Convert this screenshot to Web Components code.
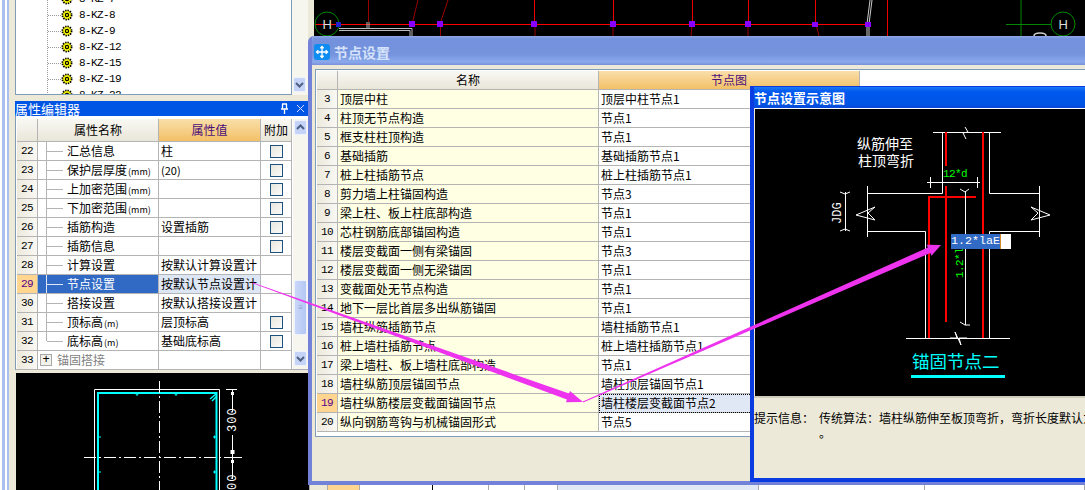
<!DOCTYPE html>
<html lang="zh-CN">

<head>
    <meta charset="UTF-8">
    <title>节点设置</title>
    <style>
        html, body { margin: 0; padding: 0; background: #000; overflow: hidden; }
        body { font: 12px "Noto Sans CJK SC", sans-serif; color: #000; }
    </style>
</head>

<body>
    <app-desktop>
        <side-bar slot="side">
            <tree-panel></tree-panel>
            <panel-title>属性编辑器</panel-title>
            <prop-grid></prop-grid>
            <section-preview></section-preview>
        </side-bar>
        <cad-view slot="main"></cad-view>

        <app-window slot="windows" variant="pale" caption="节点设置" style="left:308px;top:36px;width:790px;height:449px">
            <node-grid></node-grid>
        </app-window>
        <app-window slot="windows" variant="vivid" caption="节点设置示意图" style="left:750px;top:86px;width:350px;height:396px">
            <node-diagram></node-diagram>
        </app-window>
        <arrow-overlay slot="windows"></arrow-overlay>
    </app-desktop>

    <script>
        const FONT = `"Noto Sans CJK SC", sans-serif`;
        const MONO = `"Liberation Mono", monospace`;

        const define = (name, css, html, init) => customElements.define(name, class extends HTMLElement {
            constructor() {
                super();
                this.attachShadow({ mode: 'open' }).innerHTML = `<style>${css}</style>${html}`;
                if (init) init.call(this, this.shadowRoot);
            }
        });

        const scrollBtn = (dir) => `<svg width="13" height="15" viewBox="0 0 13 15">
            <rect x=".5" y=".5" width="12" height="14" rx="1.5" fill="#c5d3f6" stroke="#eef2fd"/>
            <path d="${dir === 'up' ? 'M3 9l3.5-3.5L10 9' : 'M3 6l3.5 3.5L10 6'}" fill="none" stroke="#4d6185" stroke-width="2"/>
        </svg>`;

        // ==================================================================== page frame
        define('app-desktop',
            `:host{display:block;position:relative;width:1085px;height:490px;overflow:hidden}
             .cols{display:grid;grid-template-columns:308px 777px;height:100%}`,
            `<div class="cols"><slot name="side"></slot><slot name="main"></slot></div><slot name="windows"></slot>`);

        define('side-bar',
            `:host{display:flex;flex-direction:column;height:490px;padding-left:15px;box-sizing:border-box;
                background:linear-gradient(90deg,#fff 0 2px,#a9c0ee 2px 5px,#fff 5px 7px,#a9c0ee 7px 9px,#ece9d8 9px)}`,
            `<slot></slot>`);

        // ==================================================================== tree
        const gear = `<svg width="12" height="12" viewBox="0 0 12 12">
            <circle cx="6" cy="6" r="4.6" fill="#ff0" stroke="#000" stroke-width="1.8" stroke-dasharray="1.4 1"/>
            <circle cx="6" cy="6" r="1.6" fill="none" stroke="#000" stroke-width="1.2"/></svg>`;
        define('tree-panel',
            `:host{display:flex;height:95px;margin-bottom:6px;flex:none;overflow:hidden;background:#f6f5ee}
             .list{width:277px;box-sizing:border-box;background:#fff;border:1px solid #7f9db9;border-width:0 1px 1px 1px;overflow:hidden;
                padding:0 0 0 31px;position:relative}
             .rows{margin-top:-9px;border-left:1px dotted #999}
             .row{display:flex;align-items:center;height:16px}
             .row i{width:13px;border-top:1px dotted #999;flex:none}
             .row span{font:11px ${MONO};letter-spacing:-.6px;margin-left:6px}
             .sb{width:15px;display:flex;flex-direction:column;justify-content:flex-end;padding:0 0 3px 1px;box-sizing:border-box;height:95px}`,
            `<div class="list"><div class="rows"></div></div><div class="sb">${scrollBtn('down')}</div>`,
            function (root) {
                root.querySelector('.rows').innerHTML = ['8-KZ-7', '8-KZ-8', '8-KZ-9', '8-KZ-12', '8-KZ-15', '8-KZ-19', '8-KZ-22']
                    .map(t => `<div class="row"><i></i>${gear}<span>${t}</span></div>`).join('');
            });

        define('panel-title',
            `:host{display:flex;align-items:center;justify-content:space-between;height:15px;flex:none;background:#0055e5;color:#fff;
                font:13px/15px ${FONT};padding-right:3px}
             .icons{display:flex;gap:7px;align-items:center}`,
            `<slot></slot><span class="icons">
                <svg width="10" height="11" viewBox="0 0 10 11"><path d="M3 1h5M3.5 1v5M7.5 1v5M2 6h7M5.5 6v5" fill="none" stroke="#fff" stroke-width="1.3"/></svg>
                <svg width="9" height="9" viewBox="0 0 9 9"><path d="M1 1l7 7M8 1L1 8" stroke="#cfe0ff" stroke-width="1"/></svg>
            </span>`);

        // ==================================================================== property grid
        const PROPS = [
            [22, '汇总信息', '柱', 1], [23, '保护层厚度<small>(mm)</small>', '<small class="v">(20)</small>', 1],
            [24, '上加密范围<small>(mm)</small>', '', 1], [25, '下加密范围<small>(mm)</small>', '', 1],
            [26, '插筋构造', '设置插筋', 1], [27, '插筋信息', '', 1],
            [28, '计算设置', '按默认计算设置计', 0], [29, '节点设置', '按默认节点设置计', 0],
            [30, '搭接设置', '按默认搭接设置计', 0], [31, '顶标高<small>(m)</small>', '层顶标高', 1],
            [32, '底标高<small>(m)</small>', '基础底标高', 1],
        ];
        const gridCss = `
            .row{display:grid;height:19px;box-sizing:border-box}
            .row>div{border-right:1px solid #b4b4b4;border-bottom:1px solid #b4b4b4;box-sizing:border-box;white-space:nowrap;overflow:hidden;line-height:18px;height:19px}
            .num{font:11px/18px ${MONO};letter-spacing:-.6px;text-align:center;background:linear-gradient(90deg,#ece9dc,#f9f8f3)}
            .hdr{height:auto;text-align:center;background:linear-gradient(#f9f8f3,#e9e6d9)}
            .hot{background:linear-gradient(#f9dfaa,#f3c067);color:#4b0f7a}
            .on.num{background:#ffd58f;color:#55008a}
            small{font-size:9px;margin-left:1px}
            small.v{font-size:11px;margin:0}`;
        define('prop-grid',
            `:host{display:flex;height:254px;flex:none;box-sizing:border-box;background:#fff;border-left:1px solid #7f9db9;border-bottom:1px solid #aab;padding:3px 0 0 1px}
             ${gridCss}
             .grid{width:276px}
             .row{grid-template-columns:21px 121px 102px 31px}
             .head{height:23px}
             .head>div{height:23px;line-height:22px}
             .name{position:relative;padding-left:29px}
             .name::before{content:"";position:absolute;left:8px;top:0;bottom:0;border-left:1px solid #b4b4b4}
             .name::after{content:"";position:absolute;left:9px;top:9px;width:16px;border-top:1px solid #b4b4b4}
             .name.last::before{bottom:9px}
             .val{padding-left:2px}
             .on.name{background:#316ac5;color:#fff}
             .on.name::before,.on.name::after{border-color:#dfe6f5}
             .on.val{background:#dce6f4}
             .chk{display:flex;align-items:center;justify-content:center}
             .chk i{display:block;width:13px;height:13px;box-sizing:border-box;border:1px solid #1c5180;background:linear-gradient(135deg,#e8e6dd,#fbfbf9)}
             .group{display:flex;align-items:center;color:#808080;padding-left:2px;gap:5px}
             .group b{display:grid;place-items:center;width:12px;height:12px;box-sizing:border-box;border:1px solid #a8a8a8;background:#f2f1ea;color:#000;font:400 12px/10px ${MONO}}
             .sb{width:15px;margin-left:1px;padding:1px 0 3px 1px;box-sizing:border-box;background:#f6f5ee;display:flex;flex-direction:column;justify-content:space-between;position:relative}
             .thumb{position:absolute;left:1px;top:161px;width:13px;height:55px;box-sizing:border-box;border:1px solid #eef2fd;border-radius:2px;background:linear-gradient(90deg,#c9d7f8,#b4c7f3);
                display:grid;place-items:center;color:#8ba0cf;font:8px/3px ${MONO}}`,
            `<div class="grid"></div><div class="sb">${scrollBtn('up')}<div class="thumb">≡</div>${scrollBtn('down')}</div>`,
            function (root) {
                const rows = PROPS.map(([n, name, val, chk]) => {
                    const on = n === 29 ? ' on' : '';
                    return `<div class="row"><div class="num${on}">${n}</div>
                        <div class="name${on}${n === 32 ? ' last' : ''}">${name}</div>
                        <div class="val${on}">${val}</div>
                        <div class="chk">${chk ? '<i></i>' : ''}</div></div>`;
                }).join('');
                root.querySelector('.grid').innerHTML =
                    `<div class="row head"><div class="num hdr"></div><div class="hdr">属性名称</div><div class="hdr hot">属性值</div><div class="hdr">附加</div></div>${rows}
                     <div class="row"><div class="num">33</div><div class="group"><b>+</b>锚固搭接</div><div></div><div></div></div>`;
            });

        // ==================================================================== section preview (bottom left)
        define('section-preview',
            `:host{display:block;margin:3px 0 0 1px;height:117px;background:#000;overflow:hidden}
             svg{display:block}
             text{font:12px ${MONO};fill:#fff;letter-spacing:1px}`,
            `<svg width="292" height="117" viewBox="16 373 292 117">
                <path d="M94.5 490V389.5H219.5V490" fill="none" stroke="#fff"/>
                <path d="M98 490V393H216.5V490" fill="none" stroke="#0ff" stroke-width="2"/>
                <path d="M159.5 381V490M84 457.5H240" stroke="#fff" stroke-dasharray="12 3 2 3" fill="none"/>
                <path d="M210 399l6-5M212 401l5-5" stroke="#0ff" stroke-width="1.5"/>
                <path d="M137 393v3M135.5 394h3M176 393v3M174.5 394h3M98 437h3M213 437h3M98 472h3M213 472h3M214.5 435.5v3M214.5 470.5v3" stroke="#0ff"/>
                <path d="M226 389.5H237M232.5 389.5V412M232.5 435V479M226 457.5H242" stroke="#fff"/>
                <path d="M231 392h3v3h-3zM230.5 450h4v4h-4zM231 460h3v3h-3z" fill="#fff"/>
                <text transform="translate(236 432) rotate(-90)">300</text>
                <text transform="translate(236 490) rotate(-90)">00</text>
            </svg>`);

        // ==================================================================== cad drawing behind the windows
        define('cad-view',
            `:host{display:flex;flex-direction:column;height:490px;background:#000}
             .top{flex:1;min-height:0;display:flex;background:#000}
             .gap{width:6px;background:#ece9d8;flex:none}
             svg{display:block;flex:1}
             text{font:13px "Liberation Sans",sans-serif;fill:#ddd}
             .strip{height:5px;flex:none;display:grid;grid-template-columns:2px 18px 32px 73px 56px 36px 33px 201px 166px 1fr;background:#fff}
             .strip div{border-right:1px solid #aaa;box-sizing:border-box}`,
            `<div class="top"><div class="gap"></div>
             <svg viewBox="314 0 771 485">
                <path d="M315 24.5H870" stroke="#f00"/>
                <circle cx="327" cy="24" r="12" fill="none" stroke="#080"/>
                <text x="322.500" y="29">H</text>
                <path d="M534.5 0V24M613.5 0V24M692.5 0V24M748.5 0V24M815.5 0V24M887.5 0V36" stroke="#e00"/>
                <path d="M368.5 0V22M418 0l-6 24M448 0l-8 24M440.5 24V36M535 24V36M613 24V36M692 24l-1 12M748 24V36M816 24l3 12" stroke="#900"/>
                <path d="M339 28.5H412V36M339 30.5H410V36M367 22V28M369 22V28" stroke="#bbb" fill="none"/>
                <path d="M870 0l-3 24V36M872 0l-3 24V36" stroke="#ccc" fill="none"/>
                <path d="M336 22h5v5h-5z" fill="#22c"/>
                <path d="M409 21h6v6h-6zM437 21h6v6h-6zM531 21h6v6h-6zM610 21h6v6h-6zM689 21h6v6h-6zM745 21h6v6h-6zM812 22h6v5h-6zM865 22h6v5h-6z" fill="#80f"/>
                <path d="M1006 24.5H1051M1021 0V36" stroke="#080"/>
                <circle cx="1063" cy="24" r="12" fill="none" stroke="#080"/>
                <text x="1058.500" y="29">H</text>
                <path d="M1034 36c0-4 12-4 12 0" fill="none" stroke="#ccc" stroke-width="1.5"/>
             </svg></div>
             <div class="strip"><div style="background:#000"></div><div style="background:#ece9d8"></div><div style="background:#ffd58f"></div><div style="border-right-color:#000"></div><div></div><div></div><div></div><div style="background:#e0e8f5"></div><div></div><div></div></div>`);

        // ==================================================================== windows (free on the desktop)
        const moveIcon = `<svg width="16" height="16" viewBox="0 0 16 16" style="display:block">
            <rect width="16" height="16" rx="3" fill="#0f8cf2"/>
            <path d="M8 2.5V13.5M2.5 8H13.5M6.3 4.3L8 2.5L9.7 4.3M6.3 11.7L8 13.5L9.7 11.7M4.3 6.3L2.5 8L4.3 9.7M11.7 6.3L13.5 8L11.7 9.7" fill="none" stroke="#fff" stroke-width="1.3"/></svg>`;
        define('app-window',
            `:host{position:absolute;display:flex;flex-direction:column;box-sizing:border-box;overflow:hidden;background:#ece9d8}
             :host([variant=pale]){border:4px solid #7282d8;border-width:0 0 4px 4px;border-top-left-radius:6px}
             :host([variant=vivid]){border:solid #0a3be0;border-width:1px 0 4px 4px;background:#ece9d8}
             .bar{display:flex;align-items:center;flex:none;white-space:nowrap}
             :host([variant=pale]) .bar{height:29px;gap:4px;padding:3px 0 0 2px;box-sizing:border-box;
                background:linear-gradient(#8fa7e6 0,#7391dc 3px,#7593dd 18px,#8aa9ec 26px,#7a8fda 29px);color:#d5e3fa;font-weight:700;font-size:14px}
             :host([variant=vivid]) .bar{height:21px;background:linear-gradient(#1b78f5,#0058ee 5px,#0055e5 17px,#0a48d8);color:#fff;font-weight:700;font-size:13px}
             :host([variant=vivid]) .ic{display:none}
             .body{flex:1;min-height:0}`,
            `<div class="bar"><span class="ic">${moveIcon}</span><span class="cap"></span></div><div class="body"><slot></slot></div>`,
            function (root) { root.querySelector('.cap').textContent = this.getAttribute('caption'); });

        // ==================================================================== node grid
        const NODES = [
            [3, '顶层中柱', '顶层中柱节点1'], [4, '柱顶无节点构造', '节点1'], [5, '框支柱柱顶构造', '节点1'],
            [6, '基础插筋', '基础插筋节点1'], [7, '桩上柱插筋节点', '桩上柱插筋节点1'], [8, '剪力墙上柱锚固构造', '节点3'],
            [9, '梁上柱、板上柱底部构造', '节点1'], [10, '芯柱钢筋底部锚固构造', '节点1'], [11, '楼层变截面一侧有梁锚固', '节点3'],
            [12, '楼层变截面一侧无梁锚固', '节点1'], [13, '变截面处无节点构造', '节点1'], [14, '地下一层比首层多出纵筋锚固', '节点1'],
            [15, '墙柱纵筋插筋节点', '墙柱插筋节点1'], [16, '桩上墙柱插筋节点', '桩上墙柱插筋节点1'], [17, '梁上墙柱、板上墙柱底部构造', '节点1'],
            [18, '墙柱纵筋顶层锚固节点', '墙柱顶层锚固节点1'], [19, '墙柱纵筋楼层变截面锚固节点', '墙柱楼层变截面节点2'], [20, '纵向钢筋弯钩与机械锚固形式', '节点5'],
        ];
        define('node-grid',
            `:host{display:block;margin:4px 0 0 3px;height:368px;box-sizing:border-box;background:#fff;border:1px solid #7f9db9;border-right:0;padding:1px 0 0 1px}
             ${gridCss}
             .row{grid-template-columns:21px 261px 261px}
             .name{background:#ffffe3;padding-left:2px}
             .val{padding-left:2px;border-right:0!important}
             .on.val{background:#e0e8f5;outline:1px dotted #000;outline-offset:-1px}`,
            `<div class="grid"></div>`,
            function (root) {
                root.querySelector('.grid').innerHTML =
                    `<div class="row head"><div class="num hdr"></div><div class="hdr">名称</div><div class="hdr hot">节点图</div></div>` +
                    NODES.map(([n, name, val]) => {
                        const on = n === 19 ? ' on' : '';
                        return `<div class="row"><div class="num${on}">${n}</div><div class="name">${name}</div><div class="val${on}">${val}</div></div>`;
                    }).join('');
            });

        // ==================================================================== node diagram
        const brk = (x, y) => `<path d="M${x - 8} ${y}L${x - 1} ${y}L${x - 3} ${y - 6}L${x + 3} ${y + 7}L${x + 1} ${y}L${x + 9} ${y}" fill="none" stroke="#fff"/>`;
        define('node-diagram',
            `:host{display:flex;flex-direction:column;height:100%;position:relative}
             .pane{height:288px;flex:none;margin-left:1px;background:#000;border:solid #fff;border-width:1px 0 0 0;box-sizing:border-box;position:relative;overflow:hidden}
             svg{display:block}
             .mono{font:11px ${MONO};letter-spacing:-.6px}
             .jdg{font:12px ${MONO}}
             .cjk{font:14px ${FONT};fill:#fff}
             .name{font:17.5px ${FONT};fill:#0ff}
             .edit{position:absolute;left:196px;top:125px;width:60px;height:15px;background:#fff;display:flex;font:11.67px/15px ${MONO};color:#fff}
             .edit span{background:#316ac5;width:49px;border-right:1px solid #d58a2a;white-space:nowrap}
             .info{border-top:2px solid #cfccbd;padding:12px 0 0 0;line-height:15px;white-space:nowrap;overflow:hidden;display:grid;grid-template-columns:65px 1fr}`,
            `<div class="pane">
                <svg width="330" height="287" viewBox="755 110 330 287">
                    <path d="M933 133.5H1001M942.5 133.5V194.5H867M867.5 187V238M867 232.5H925.5V339M989.5 339V232.5H1039M1039.5 187V238M1039 194.5H989.5V133.5M906 339.5H1010" fill="none" stroke="#fff"/>
                    <path d="M965 128l3 5-5 1 3 6" fill="none" stroke="#fff"/>
                    <path d="M946 133V167M946 187V323M983 133V339M929 339V198H976" fill="none" stroke="#f00" stroke-width="2"/>
                    <path d="M927 183.5H980M930.5 178V189M977.5 178V189M965.5 192V326M960 190l5 3 4-3M960 323l5 3 5 0" fill="none" stroke="#fff"/>
                    <path d="M845.5 193V232M840 193l5 2 5-2M840 232l5-2 5 2" fill="none" stroke="#fff"/>
                    ${brk(958, 339)}
                    <path d="M856 216L875 208L868 214L875 221L856 216ZM1050 216L1031 208L1038 214L1031 221L1050 216Z" fill="none" stroke="#fff"/>
                    <text class="cjk" x="857" y="150">纵筋伸至</text>
                    <text class="cjk" x="858" y="167">柱顶弯折</text>
                    <text class="mono" x="943" y="178" fill="#0f0">12*d</text>
                    <text class="jdg" x="0" y="0" fill="#fff" transform="translate(841 225) rotate(-90)">JDG</text>
                    <text class="mono" x="0" y="0" fill="#0f0" transform="translate(963 279) rotate(-90)">1.2*l</text>
                    <text class="name" x="912" y="369">锚固节点二</text>
                    <rect x="911" y="376" width="94" height="3" fill="#0ff"/>
                </svg>
                <div class="edit"><span>1.2*laE</span></div>
             </div>
             <div class="info"><span>提示信息：</span><span>传统算法：墙柱纵筋伸至板顶弯折，弯折长度默认为12d<br>。</span></div>`);

        // ==================================================================== magenta arrows over everything
        function arrow(x1, y1, x2, y2, w0, w1, hw, hl) {
            const len = Math.hypot(x2 - x1, y2 - y1), ux = (x2 - x1) / len, uy = (y2 - y1) / len, px = -uy, py = ux;
            const bx = x2 - ux * hl, by = y2 - uy * hl;
            const pt = (x, y, k) => `${(x + px * k).toFixed(1)},${(y + py * k).toFixed(1)}`;
            return `<polygon fill="#ee33ee" points="${pt(x1, y1, w0)} ${pt(bx, by, w1)} ${pt(bx, by, hw)} ${x2},${y2} ${pt(bx, by, -hw)} ${pt(bx, by, -w1)} ${pt(x1, y1, -w0)}"/>`;
        }
        define('arrow-overlay',
            `:host{position:absolute;left:0;top:0;width:1085px;height:490px;pointer-events:none}
             svg{display:block}`,
            `<svg width="1085" height="490">${arrow(253, 283, 583, 402, .4, 3.2, 6, 16)}${arrow(583, 402, 941, 245, .4, 3, 6, 13)}</svg>`);
    </script>
</body>

</html>
